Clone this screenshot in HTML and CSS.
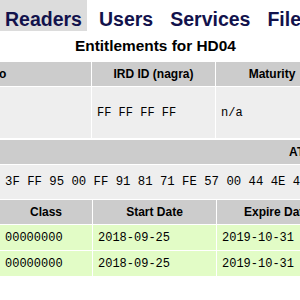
FILE: index.html
```html
<!DOCTYPE html>
<html>
<head>
<meta charset="utf-8">
<link rel="stylesheet" href="styles.css">
</head>
<body>
<div class="page">
  <nav class="menu">
    <span class="menu-item active">Readers</span>
    <span class="menu-item">Users</span>
    <span class="menu-item">Services</span>
    <span class="menu-item">Files</span>
  </nav>
  <h1 class="title">Entitlements for HD04</h1>

  <div class="table t-info">
    <div class="th">Card Info</div>
    <div class="th">IRD ID (nagra)</div>
    <div class="th">Maturity</div>
    <div class="td tall"></div>
    <div class="td tall mono">FF FF FF FF</div>
    <div class="td tall mono">n/a</div>
  </div>

  <div class="table t-atr">
    <div class="th">ATR</div>
    <div class="td atr mono">3F FF 95 00 FF 91 81 71 FE 57 00 44 4E 41 53 50 34 31 30 20 52 65 76 51 32 35 17</div>
  </div>

  <div class="table t-ent">
    <div class="th">Class</div>
    <div class="th">Start Date</div>
    <div class="th">Expire Date</div>
    <div class="td ok mono">00000000</div>
    <div class="td ok mono">2018-09-25</div>
    <div class="td ok mono">2019-10-31</div>
    <div class="td ok mono">00000000</div>
    <div class="td ok mono">2018-09-25</div>
    <div class="td ok mono">2019-10-31</div>
  </div>
</div>
</body>
</html>
```

FILE: styles.css
```css
html, body {
  margin: 0;
  padding: 0;
  background: #fff;
  overflow: hidden;
}
.page {
  width: 300px;
  height: 300px;
  overflow: hidden;
  font-family: "Liberation Sans", Arial, sans-serif;
  color: #000;
}
.menu {
  display: flex;
  gap: 7px;
  height: 31px;
  white-space: nowrap;
}
.menu-item {
  font-size: 19.5px;
  font-weight: bold;
  color: #12124c;
  padding: 7px 5px 0 5px;
  line-height: 24px;
  height: 24px;
}
.menu-item.active {
  background: #dcdcdc;
}
.title {
  margin: 5px 0 0 0;
  padding-left: 75px;
  font-size: 15.4px;
  line-height: 20px;
  font-weight: bold;
  white-space: nowrap;
  width: 400px;
}
.table {
  display: grid;
  gap: 1px;
  margin-top: 6px;
}
.t-info {
  margin-left: -131px;
  grid-template-columns: 222px 123px 112px;
  width: 459px;
}
.t-atr {
  margin-top: 2px;
  grid-template-columns: 602px;
  width: 602px;
}
.t-ent {
  margin-top: 1px;
  grid-template-columns: 92px 123px 120px;
  width: 337px;
}
.th {
  background: #cccccc;
  font-size: 12px;
  font-weight: bold;
  text-align: center;
  height: 24px;
  line-height: 24px;
  white-space: nowrap;
}
.td {
  background: #eeeeee;
  font-size: 12px;
  padding: 0 5px;
  height: 25px;
  display: flex;
  align-items: center;
  white-space: nowrap;
}
.mono {
  font-family: "Liberation Mono", "Courier New", monospace;
}
.tall {
  height: 51px;
}
.atr {
  height: 34px;
  font-size: 12.3px;
}
.ok {
  background: #e2fcc6;
}
```
